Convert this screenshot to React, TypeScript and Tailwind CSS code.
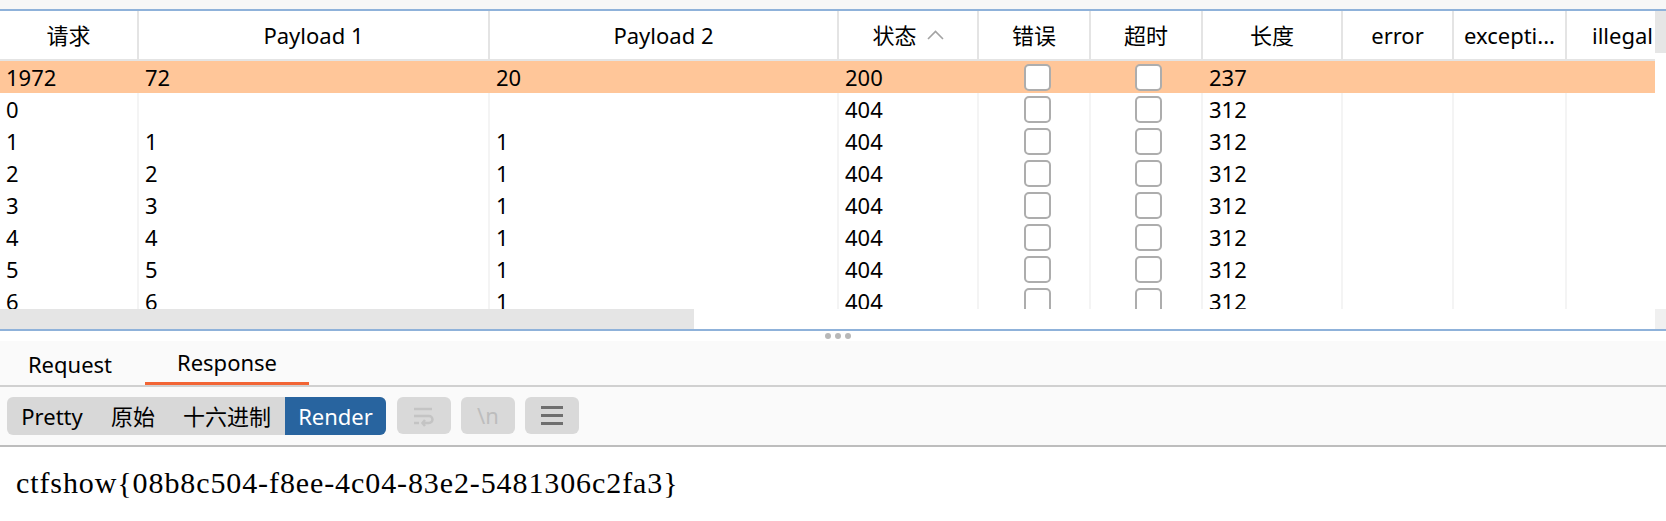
import React from 'react';

type Row = { id: string; p1: string; p2: string; status: string; length: string; selected?: boolean };

const rows: Row[] = [
  { id: '1972', p1: '72', p2: '20', status: '200', length: '237', selected: true },
  { id: '0', p1: '', p2: '', status: '404', length: '312' },
  { id: '1', p1: '1', p2: '1', status: '404', length: '312' },
  { id: '2', p1: '2', p2: '1', status: '404', length: '312' },
  { id: '3', p1: '3', p2: '1', status: '404', length: '312' },
  { id: '4', p1: '4', p2: '1', status: '404', length: '312' },
  { id: '5', p1: '5', p2: '1', status: '404', length: '312' },
  { id: '6', p1: '6', p2: '1', status: '404', length: '312' },
];

const widths = ['w-[139px]', 'w-[351px]', 'w-[349px]', 'w-[140px]', 'w-[112px]', 'w-[112px]', 'w-[140px]', 'w-[111px]', 'w-[113px]'];

const Checkbox = () => (
  <div className="w-[27px] h-[27px] rounded-[5px] border-2 border-[#adadad] bg-white" />
);

const SortUp = () => (
  <svg width="17" height="10" viewBox="0 0 17 10" className="ml-[10px]">
    <polyline points="1,9 8.5,1.5 16,9" fill="none" stroke="#a3a3a3" strokeWidth="1.6" />
  </svg>
);

const HeaderCell: React.FC<{ w: string; children: React.ReactNode }> = ({ w, children }) => (
  <div className={`${w} shrink-0 h-full flex items-center justify-center border-r-2 border-[#e4e4e4]`}>
    {children}
  </div>
);

const TableRow: React.FC<{ row: Row }> = ({ row }) => {
  const sep = row.selected ? 'border-r-2 border-transparent' : 'border-r-2 border-[#f4f4f4]';
  return (
    <div className={`flex h-[32px] shrink-0 ${row.selected ? 'bg-[#ffc699]' : 'bg-white'}`}>
      <div className={`${widths[0]} ${sep} shrink-0 flex items-center pl-[6px]`}>{row.id}</div>
      <div className={`${widths[1]} ${sep} shrink-0 flex items-center pl-[6px]`}>{row.p1}</div>
      <div className={`${widths[2]} ${sep} shrink-0 flex items-center pl-[6px]`}>{row.p2}</div>
      <div className={`${widths[3]} ${sep} shrink-0 flex items-center pl-[6px]`}>{row.status}</div>
      <div className={`${widths[4]} ${sep} shrink-0 flex items-center pl-[45px]`}><Checkbox /></div>
      <div className={`${widths[5]} ${sep} shrink-0 flex items-center pl-[44px]`}><Checkbox /></div>
      <div className={`${widths[6]} ${sep} shrink-0 flex items-center pl-[6px]`}>{row.length}</div>
      <div className={`${widths[7]} ${sep} shrink-0`} />
      <div className={`${widths[8]} ${sep} shrink-0`} />
      <div className="flex-1" />
    </div>
  );
};

const WrapIcon = () => (
  <svg width="24" height="22" viewBox="0 0 24 22" fill="none" stroke="#c4c4c4" strokeWidth="2.5">
    <path d="M2 4 H20" />
    <path d="M2 11 H17 a3.5 3.5 0 0 1 0 7 H11" />
    <path d="M13 15 L10.5 18 L13 21" />
    <path d="M2 18 H7" />
  </svg>
);

const MenuIcon = () => (
  <div className="flex flex-col gap-[5px]">
    <div className="w-[22px] h-[3px] bg-[#6f6f6f]" />
    <div className="w-[22px] h-[3px] bg-[#6f6f6f]" />
    <div className="w-[22px] h-[3px] bg-[#6f6f6f]" />
  </div>
);

export default function App() {
  return (
    <div className="w-[1666px] h-[521px] bg-white overflow-hidden flex flex-col text-black text-[22px] font-['Noto_Sans','Noto_Sans_CJK_SC',sans-serif]">
      <div className="h-[9px] bg-[#f7f7f7] shrink-0" />
      <div className="h-[2px] bg-[#8fb2da] shrink-0" />

      {/* results table */}
      <div className="flex h-[298px] shrink-0">
        <div className="flex-1 flex flex-col overflow-hidden">
          <div className="flex h-[50px] shrink-0 bg-white border-b-2 border-[#e4e4e4]">
            <HeaderCell w={widths[0]}>请求</HeaderCell>
            <HeaderCell w={widths[1]}>Payload 1</HeaderCell>
            <HeaderCell w={widths[2]}>Payload 2</HeaderCell>
            <HeaderCell w={widths[3]}>
              <span>状态</span>
              <SortUp />
            </HeaderCell>
            <HeaderCell w={widths[4]}>错误</HeaderCell>
            <HeaderCell w={widths[5]}>超时</HeaderCell>
            <HeaderCell w={widths[6]}>长度</HeaderCell>
            <HeaderCell w={widths[7]}>error</HeaderCell>
            <HeaderCell w={widths[8]}>excepti...</HeaderCell>
            <div className="flex-1 h-full flex items-center pl-[25px] whitespace-nowrap overflow-hidden">illegal</div>
          </div>
          {rows.map(r => <TableRow key={r.id} row={r} />)}
        </div>
        <div className="w-[11px] shrink-0 flex flex-col bg-white">
          <div className="h-[42px] bg-[#e6e6e6]" />
        </div>
      </div>

      {/* horizontal scrollbar */}
      <div className="flex h-[20px] shrink-0">
        <div className="w-[694px] bg-[#e5e5e5]" />
        <div className="flex-1 bg-white" />
        <div className="w-[11px] bg-[#f0f0f0]" />
      </div>
      <div className="h-[2px] bg-[#8fb2da] shrink-0" />

      {/* splitter */}
      <div className="h-[10px] shrink-0 bg-white flex items-center justify-center gap-[4px] pl-[10px]">
        <div className="w-[6px] h-[6px] rounded-full bg-[#b8b8b8]" />
        <div className="w-[6px] h-[6px] rounded-full bg-[#b8b8b8]" />
        <div className="w-[6px] h-[6px] rounded-full bg-[#b8b8b8]" />
      </div>

      {/* tabs */}
      <div className="h-[44px] shrink-0 bg-[#fafafa] flex">
        <div className="w-[140px] flex items-center justify-center pt-[2px]">Request</div>
        <div className="ml-[5px] w-[164px] flex items-center justify-center pt-[2px] border-b-[3px] border-[#f26535]">Response</div>
      </div>
      <div className="h-[2px] bg-[#d0d0d0] shrink-0" />

      {/* toolbar */}
      <div className="h-[58px] shrink-0 bg-[#fafafa] flex items-start pt-[10px] pl-[7px]">
        <div className="flex h-[38px] rounded-[6px] bg-[#d8d8d8] overflow-hidden">
          <div className="w-[90px] flex items-center justify-center">Pretty</div>
          <div className="w-[72px] flex items-center justify-center">原始</div>
          <div className="w-[116px] flex items-center justify-center">十六进制</div>
          <div className="w-[101px] flex items-center justify-center bg-[#28649f] text-white">Render</div>
        </div>
        <div className="ml-[11px] flex gap-[10px]">
          <div className="w-[54px] h-[37px] rounded-[6px] bg-[#d9d9d9] flex items-center justify-center"><WrapIcon /></div>
          <div className="w-[54px] h-[37px] rounded-[6px] bg-[#d9d9d9] flex items-center justify-center text-[#bdbdbd] text-[22px]">\n</div>
          <div className="w-[54px] h-[37px] rounded-[6px] bg-[#d9d9d9] flex items-center justify-center"><MenuIcon /></div>
        </div>
      </div>
      <div className="h-[2px] bg-[#bdbdbd] shrink-0" />

      {/* rendered response */}
      <div className="flex-1 bg-white pl-[16px] pt-[20px]">
        <div className="font-['Liberation_Serif',serif] text-[30px] leading-[32px] tracking-[0.9px] whitespace-nowrap">
          ctfshow{'{'}08b8c504-f8ee-4c04-83e2-5481306c2fa3{'}'}
        </div>
      </div>
    </div>
  );
}
